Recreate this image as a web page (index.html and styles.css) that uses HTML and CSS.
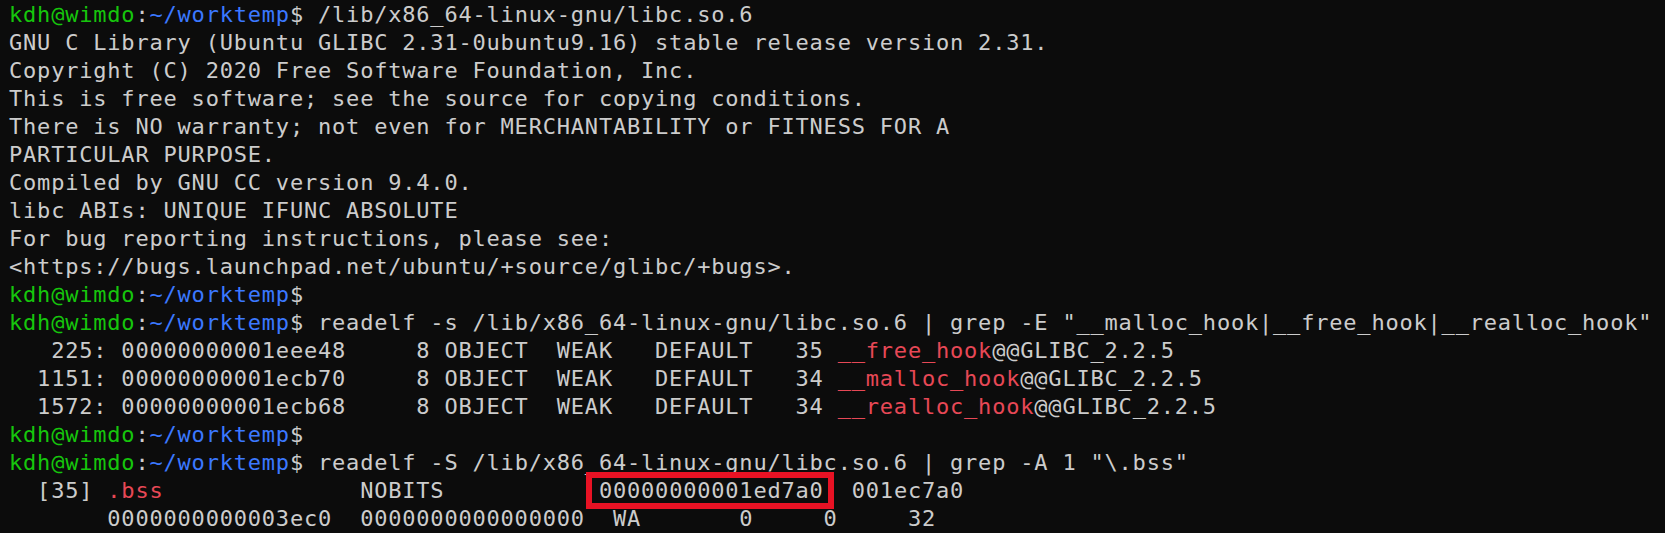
FILE: index.html
```html
<!DOCTYPE html>
<html>
<head>
<meta charset="utf-8">
<link rel="stylesheet" href="styles.css">
</head>
<body>
<div class="term">
<div class="ln"><span class="u">kdh@wimdo</span>:<span class="p">~/worktemp</span>$ /lib/x86_64-linux-gnu/libc.so.6</div>
<div class="ln">GNU C Library (Ubuntu GLIBC 2.31-0ubuntu9.16) stable release version 2.31.</div>
<div class="ln">Copyright (C) 2020 Free Software Foundation, Inc.</div>
<div class="ln">This is free software; see the source for copying conditions.</div>
<div class="ln">There is NO warranty; not even for MERCHANTABILITY or FITNESS FOR A</div>
<div class="ln">PARTICULAR PURPOSE.</div>
<div class="ln">Compiled by GNU CC version 9.4.0.</div>
<div class="ln">libc ABIs: UNIQUE IFUNC ABSOLUTE</div>
<div class="ln">For bug reporting instructions, please see:</div>
<div class="ln">&lt;https://bugs.launchpad.net/ubuntu/+source/glibc/+bugs&gt;.</div>
<div class="ln"><span class="u">kdh@wimdo</span>:<span class="p">~/worktemp</span>$</div>
<div class="ln"><span class="u">kdh@wimdo</span>:<span class="p">~/worktemp</span>$ readelf -s /lib/x86_64-linux-gnu/libc.so.6 | grep -E "__malloc_hook|__free_hook|__realloc_hook"</div>
<div class="ln">   225: 00000000001eee48     8 OBJECT  WEAK   DEFAULT   35 <span class="r">__free_hook</span>@@GLIBC_2.2.5</div>
<div class="ln">  1151: 00000000001ecb70     8 OBJECT  WEAK   DEFAULT   34 <span class="r">__malloc_hook</span>@@GLIBC_2.2.5</div>
<div class="ln">  1572: 00000000001ecb68     8 OBJECT  WEAK   DEFAULT   34 <span class="r">__realloc_hook</span>@@GLIBC_2.2.5</div>
<div class="ln"><span class="u">kdh@wimdo</span>:<span class="p">~/worktemp</span>$</div>
<div class="ln"><span class="u">kdh@wimdo</span>:<span class="p">~/worktemp</span>$ readelf -S /lib/x86_64-linux-gnu/libc.so.6 | grep -A 1 "\.bss"</div>
<div class="ln">  [35] <span class="r">.bss</span>              NOBITS           <span class="mark">00000000001ed7a0</span>  001ec7a0</div>
<div class="ln">       0000000000003ec0  0000000000000000  WA       0     0     32</div>
</div>
</body>
</html>
```
FILE: styles.css
```css
html, body {
  margin: 0;
  padding: 0;
  background: #0c0c0c;
}
body {
  width: 1665px;
  height: 533px;
  overflow: hidden;
}
.term {
  padding: 1px 0 0 9px;
  font-family: "DejaVu Sans Mono", "Liberation Mono", monospace;
  font-size: 22px;
  letter-spacing: 0.8px;
  line-height: 28px;
  color: #cccccc;
}
.ln {
  white-space: pre;
  height: 28px;
}
.u {
  color: #16c60c;
}
.p {
  color: #3b78ff;
}
.r {
  color: #e74856;
}
.mark {
  position: relative;
}
.mark::after {
  content: "";
  position: absolute;
  left: -13px;
  right: -10px;
  top: -6px;
  bottom: -6px;
  border: 6px solid #e81224;
}
```
